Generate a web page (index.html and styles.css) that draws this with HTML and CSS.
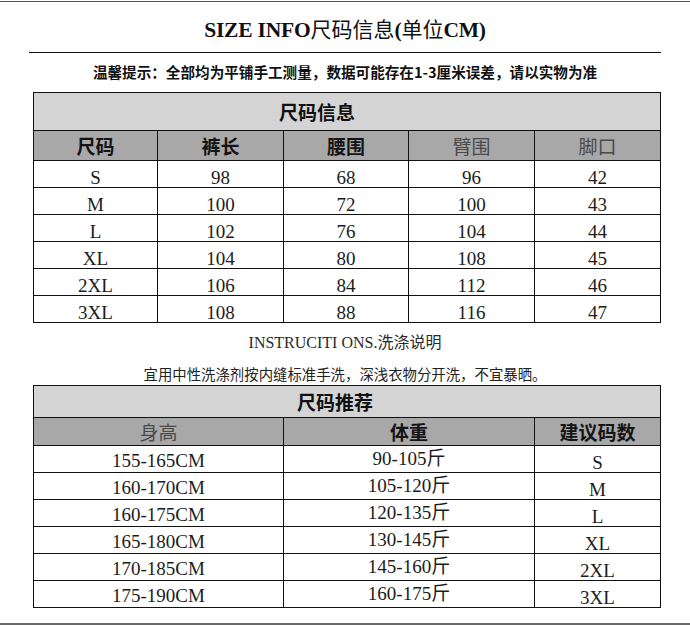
FILE: index.html
```html
<!DOCTYPE html>
<html lang="zh-CN">
<head>
<meta charset="utf-8">
<title>SIZE INFO尺码信息</title>
<link rel="stylesheet" href="styles.css">
</head>
<body>
<div class="page">
  <div class="topline"></div>
  <h1 class="title">SIZE INFO<span class="cjk">尺码信息</span>(<span class="cjk">单位</span>CM)</h1>
  <div class="rule"></div>
  <p class="notice">温馨提示：全部均为平铺手工测量，数据可能存在1-3厘米误差，请以实物为准</p>

  <table class="grid grid-info">
    <colgroup>
      <col class="c124"><col class="c126"><col class="c125"><col class="c126"><col class="c126">
    </colgroup>
    <tr class="row-cap"><td colspan="5" class="cap cap-info">尺码信息</td></tr>
    <tr class="row-head">
      <td class="hd">尺码</td><td class="hd">裤长</td><td class="hd">腰围</td><td class="hd hd-light">臂围</td><td class="hd hd-light">脚口</td>
    </tr>
    <tr class="row-data"><td>S</td><td>98</td><td>68</td><td>96</td><td>42</td></tr>
    <tr class="row-data"><td>M</td><td>100</td><td>72</td><td>100</td><td>43</td></tr>
    <tr class="row-data"><td>L</td><td>102</td><td>76</td><td>104</td><td>44</td></tr>
    <tr class="row-data"><td>XL</td><td>104</td><td>80</td><td>108</td><td>45</td></tr>
    <tr class="row-data"><td>2XL</td><td>106</td><td>84</td><td>112</td><td>46</td></tr>
    <tr class="row-data"><td>3XL</td><td>108</td><td>88</td><td>116</td><td>47</td></tr>
  </table>

  <p class="instr">INSTRUCITI ONS.<span class="light">洗涤说明</span></p>
  <p class="wash">宜用中性洗涤剂按内缝标准手洗，深浅衣物分开洗，不宜暴晒。</p>

  <table class="grid grid-rec">
    <colgroup>
      <col class="c250"><col class="c251"><col class="c126">
    </colgroup>
    <tr class="row-cap2"><td colspan="3" class="cap cap-rec">尺码推荐</td></tr>
    <tr class="row-head2">
      <td class="hd hd-light">身高</td><td class="hd">体重</td><td class="hd">建议码数</td>
    </tr>
    <tr class="row-data"><td class="h">155-165CM</td><td class="w">90-105斤</td><td class="s">S</td></tr>
    <tr class="row-data"><td class="h">160-170CM</td><td class="w">105-120斤</td><td class="s">M</td></tr>
    <tr class="row-data"><td class="h">160-175CM</td><td class="w">120-135斤</td><td class="s">L</td></tr>
    <tr class="row-data"><td class="h">165-180CM</td><td class="w">130-145斤</td><td class="s">XL</td></tr>
    <tr class="row-data"><td class="h">170-185CM</td><td class="w">145-160斤</td><td class="s">2XL</td></tr>
    <tr class="row-data"><td class="h">175-190CM</td><td class="w">160-175斤</td><td class="s">3XL</td></tr>
  </table>

  <div class="bottomline"></div>
</div>
</body>
</html>
```

FILE: styles.css
```css
html, body {
  margin: 0;
  padding: 0;
  background: #ffffff;
}

.page {
  width: 690px;
  height: 626px;
  overflow: hidden;
  font-family: "Liberation Serif", "Noto Sans CJK SC", serif;
  color: #111111;
}

.topline {
  height: 1px;
  margin-top: 1px;
  background: #555555;
}

.title {
  margin: 14px 0 0;
  height: 24px;
  line-height: 24px;
  text-align: center;
  font-size: 21.5px;
  font-weight: 700;
  color: #111111;
  letter-spacing: -0.2px;
}

.title .cjk {
  font-family: "Noto Sans CJK SC", sans-serif;
  font-weight: 400;
  font-size: 21px;
  letter-spacing: 0;
}

.rule {
  height: 1px;
  margin: 12px 29px 0;
  background: #111111;
}

.notice {
  margin: 9px 0 0;
  height: 20px;
  line-height: 20px;
  text-align: center;
  font-family: "Noto Sans CJK SC", sans-serif;
  font-size: 14.6px;
  font-weight: 700;
  color: #111111;
}

.grid {
  margin-left: 33px;
  width: 628px;
  table-layout: fixed;
  border-collapse: separate;
  border-spacing: 0;
  border-top: 1px solid #111111;
  border-left: 1px solid #111111;
}

.grid-info {
  margin-top: 10px;
}

.grid-rec {
  margin-top: 2px;
}

.c124 { width: 124px; }
.c125 { width: 125px; }
.c126 { width: 126px; }
.c250 { width: 250px; }
.c251 { width: 251px; }

.grid td {
  border-right: 1px solid #111111;
  border-bottom: 1px solid #111111;
  padding: 0;
  text-align: center;
  overflow: hidden;
  white-space: nowrap;
}

.row-cap { height: 38px; }
.row-head { height: 30px; }
.row-cap2 { height: 32px; }
.row-head2 { height: 28px; }
.row-data { height: 27px; }

.cap {
  background: #d4d4d4;
  vertical-align: middle;
  font-family: "Noto Sans CJK SC", sans-serif;
  font-size: 19px;
  font-weight: 700;
  line-height: 24px;
  color: #111111;
}

.grid td.cap-info { padding-right: 60px; }
.grid td.cap-rec { padding-right: 24px; }

.hd {
  background: #a8a8a8;
  vertical-align: middle;
  font-family: "Noto Sans CJK SC", sans-serif;
  font-size: 19px;
  font-weight: 700;
  line-height: 24px;
  color: #141414;
}

.grid td.hd-light {
  font-weight: 400;
  color: #4a4a4a;
}

.row-data td {
  vertical-align: bottom;
  font-family: "Liberation Serif", "Noto Sans CJK SC", serif;
  font-size: 19px;
  line-height: 19px;
  color: #1c1c1c;
}

.row-data td.h { padding-bottom: 2px; }
.row-data td.w { padding-bottom: 4px; }
.row-data td.s { padding-bottom: 0; }

.instr {
  margin: 8px 0 0;
  height: 20px;
  line-height: 20px;
  text-align: center;
  font-family: "Liberation Serif", "Noto Sans CJK SC", serif;
  font-size: 16px;
  color: #2a2a2a;
}

.instr .light {
  font-family: "Noto Sans CJK SC", sans-serif;
  font-weight: 400;
}

.wash {
  margin: 14px 0 0;
  height: 18px;
  line-height: 18px;
  text-align: center;
  font-family: "Noto Sans CJK SC", sans-serif;
  font-size: 14.4px;
  color: #222222;
}

.bottomline {
  height: 2px;
  margin-top: 15px;
  background: #6a6a6a;
}
```
